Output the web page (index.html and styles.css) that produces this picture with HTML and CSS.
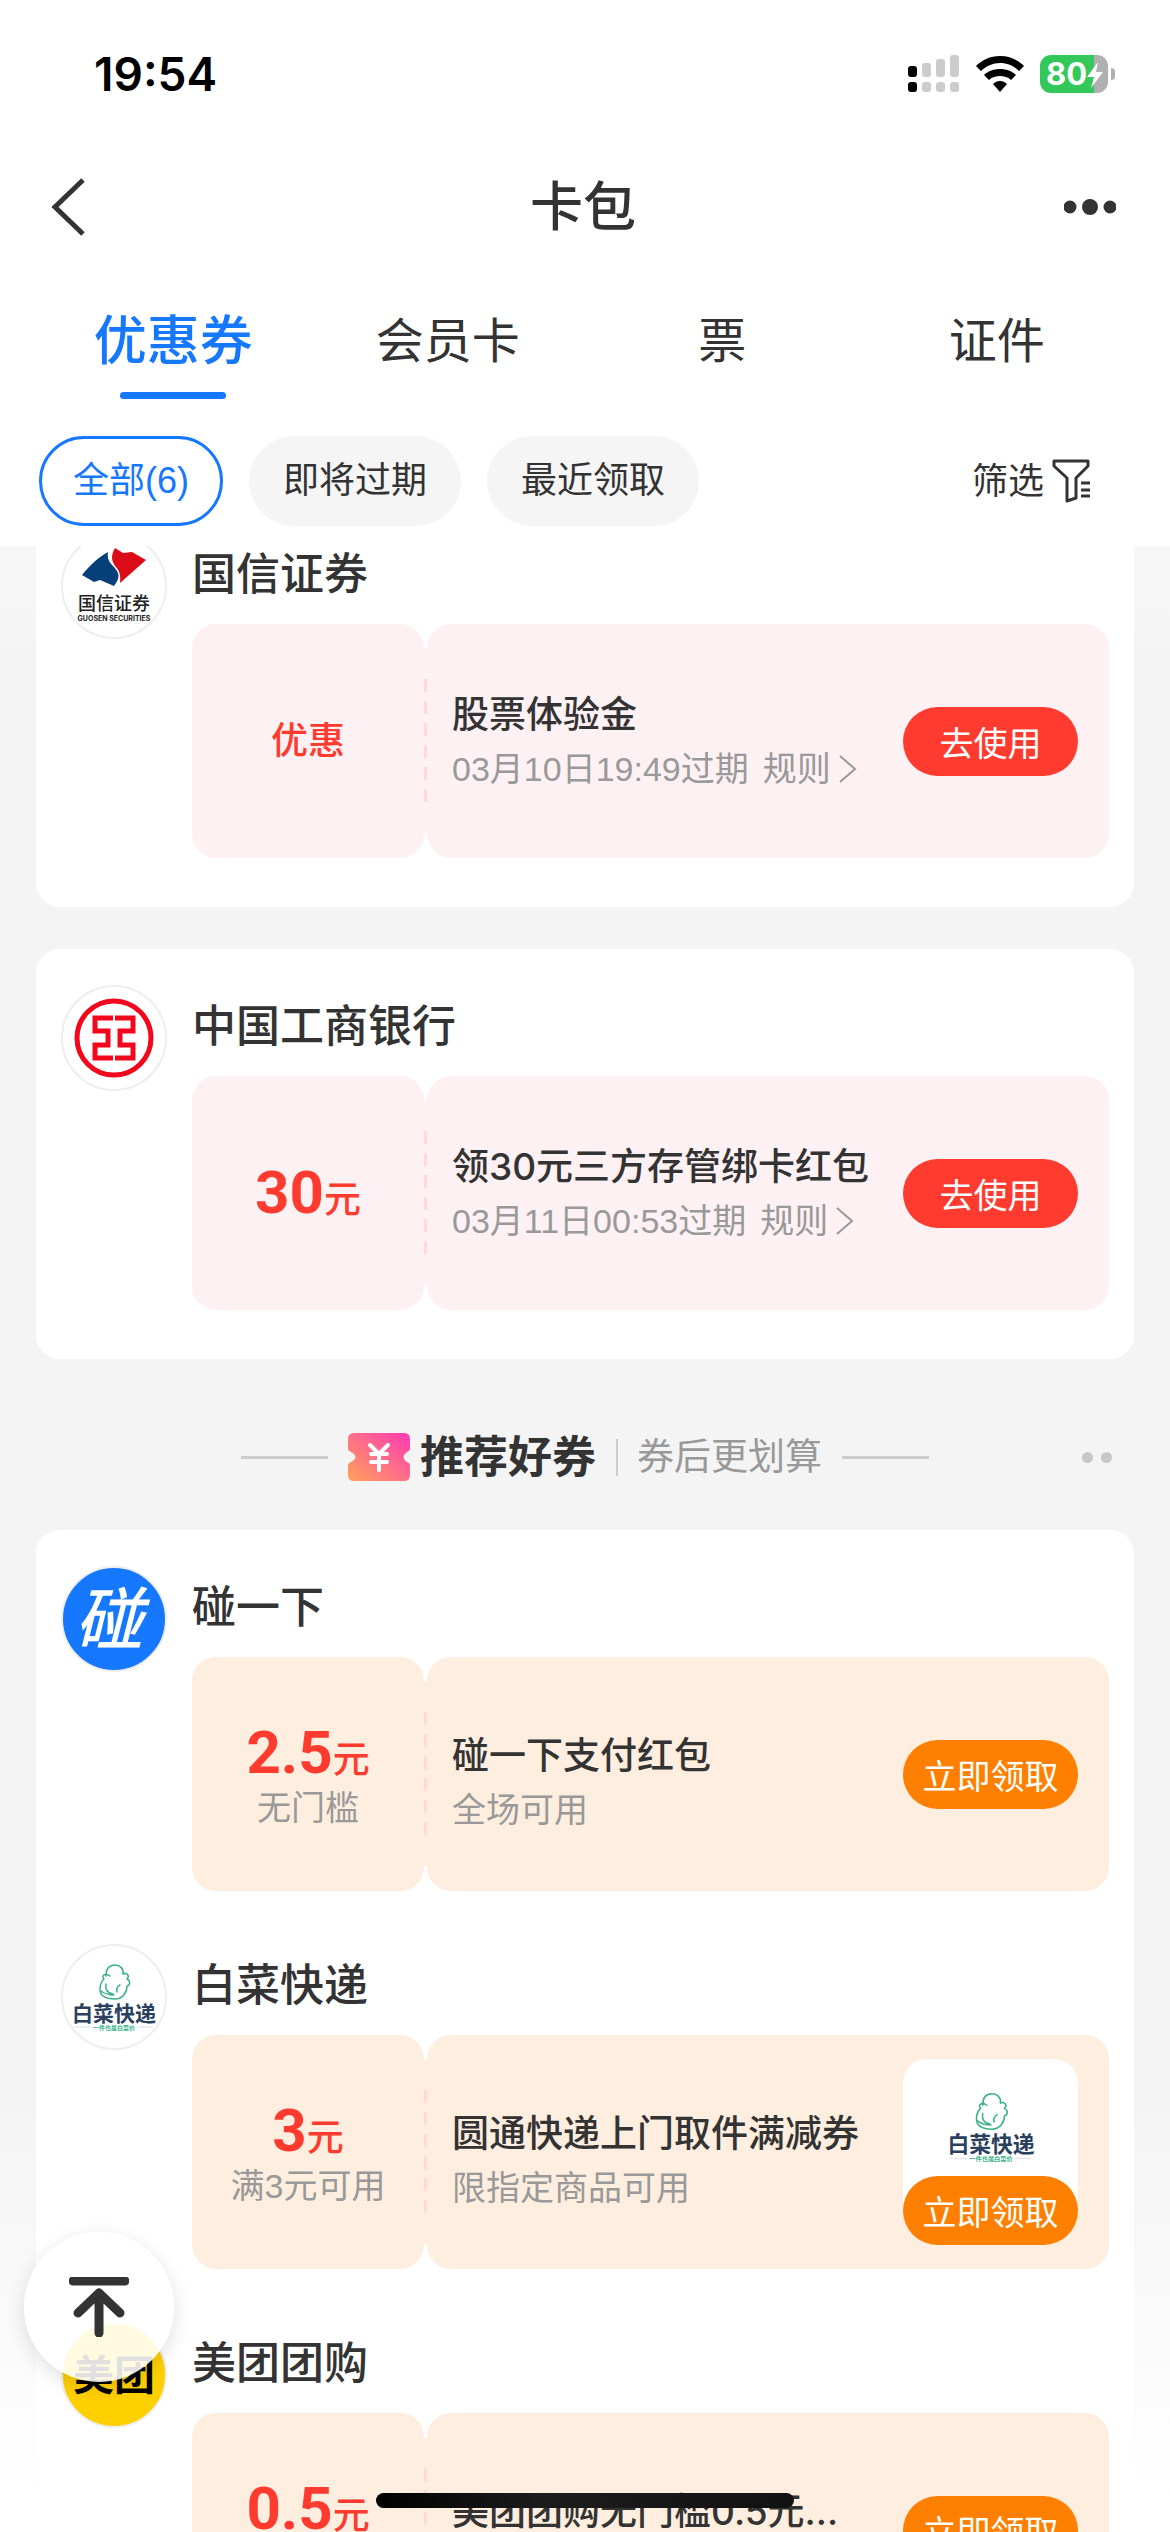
FILE: index.html
```html
<!DOCTYPE html>
<html lang="zh-CN">
<head>
<meta charset="utf-8">
<meta name="viewport" content="width=device-width, initial-scale=1">
<title>卡包</title>
<link rel="stylesheet" href="styles.css">
</head>
<body>
<svg class="defs" aria-hidden="true">
  <defs>
    <g id="cabbage" fill="none" stroke="#3cb28a" stroke-width="1.5" stroke-linecap="round" stroke-linejoin="round">
      <path d="M7 12C7 4 11 1 16 1s9 4 8 9c4-2 7 2 4 5 4 2 3 7 0 7 0 6-4 13-12 13C7 35 1 32 1 25c0-5 2-8 4-10-3-3 1-7 6-3"/>
      <path d="M7 20c-1 5 1 9 7 10M2 27c4 3 8 4 13 4M18 28c-1-4 1-6 3-7"/>
    </g>
  </defs>
</svg>
<div class="app">
  <header class="top">
    <div class="status">
      <span class="time">19:54</span>
      <span class="status-icons">
        <svg width="52" height="38" viewBox="0 0 52 38" aria-hidden="true">
          <g fill="#000"><rect x="0" y="11" width="9" height="11" rx="3"/><rect x="0" y="27" width="9" height="10" rx="3"/></g>
          <g fill="#ccc"><rect x="14" y="8" width="9" height="14" rx="3"/><rect x="28" y="4" width="9" height="18" rx="3"/><rect x="42" y="0" width="9" height="22" rx="3"/><rect x="14" y="27" width="9" height="10" rx="3"/><rect x="28" y="27" width="9" height="10" rx="3"/><rect x="42" y="27" width="9" height="10" rx="3"/></g>
        </svg>
        <svg width="48" height="36" viewBox="0 0 48 36" aria-hidden="true">
          <path d="M24 0C34 0 42 4 48 10l-5 5C38 10 31 7 24 7S10 10 5 15l-5-5C6 4 14 0 24 0z"/>
          <path d="M24 13c6 0 12 2 16 6l-5 5c-3-3-7-4-11-4s-8 1-11 4l-5-5c4-4 10-6 16-6z"/>
          <path d="M24 25c3 0 5 1 7 3l-7 8-7-8c2-2 4-3 7-3z"/>
        </svg>
        <span class="battery">
          <span class="battery-level">80</span>
          <svg class="bolt" width="18" height="26" viewBox="0 0 18 26" aria-hidden="true"><path d="M12 0L1 15h7L5 26 17 10h-7z" fill="#fff"/></svg>
        </span>
      </span>
    </div>
    <div class="nav">
      <button class="icon-btn" aria-label="返回"><svg width="36" height="60" viewBox="0 0 36 60"><path d="M33 3L5 30l28 27" fill="none" stroke="#333" stroke-width="5"/></svg></button>
      <h1>卡包</h1>
      <button class="icon-btn" aria-label="更多"><svg width="52" height="18" viewBox="0 0 52 18" fill="#333"><circle cx="6" cy="9" r="6.500"/><circle cx="26" cy="9" r="8"/><circle cx="46" cy="9" r="6.500"/></svg></button>
    </div>
    <nav class="tabs">
      <button class="tab active">优惠券</button>
      <button class="tab">会员卡</button>
      <button class="tab">票</button>
      <button class="tab">证件</button>
    </nav>
    <div class="filters">
      <button class="chip selected">全部(6)</button>
      <button class="chip">即将过期</button>
      <button class="chip">最近领取</button>
      <button class="filter-btn">筛选
        <svg width="38" height="44" viewBox="0 0 38 44" fill="none" stroke="#333" stroke-width="3" stroke-linejoin="round"><path d="M2 2h34v5L24 19v20l-9 3V19L2 7z"/><path d="M29 24h9M29 31h9M29 37h9"/></svg>
      </button>
    </div>
  </header>

  <main class="list">
    <section class="card">
      <article class="entry">
        <div class="logo"><svg width="102" height="102" viewBox="0 0 102 102" role="img" aria-label="国信证券">
          <path d="M45 17c-9 5-17 12-26 23l12 7 6-2 14 6c7-9 5-13 0-19-5-5-7-8-6-15z" fill="#054078"/>
          <path d="M52 13l8 5 9-1 14 8-26 23c1-9-1-13-5-17-4-6-4-11 0-18z" fill="#dc0b18"/>
          <text x="51" y="75" class="gx-name">国信证券</text><text x="51" y="86" class="gx-en">GUOSEN SECURITIES</text>
        </svg></div>
        <div class="entry-body">
          <h2>国信证券</h2>
          <div class="coupon pink">
            <div class="worth"><p class="label">优惠</p></div>
            <div class="rip"></div>
            <div class="info">
              <div class="text"><h3>股票体验金</h3><p>03月10日19:49过期<a href="#rules">规则<svg width="18" height="28" viewBox="0 0 18 28"><path d="M1 1l15 13L1 27" fill="none" stroke="#999" stroke-width="2"/></svg></a></p></div>
              <button class="action">去使用</button>
            </div>
          </div>
        </div>
      </article>
    </section>

    <section class="card">
      <article class="entry">
        <div class="logo"><svg width="102" height="102" viewBox="0 0 102 102" role="img" aria-label="中国工商银行" fill="none" stroke="#f3071c">
          <circle cx="51" cy="51" r="37" stroke-width="5"/>
          <path d="M50 31H32v13h13v14H32v13h18M52 31h18v13H57v14h13v13H52" stroke-width="5"/>
        </svg></div>
        <div class="entry-body">
          <h2>中国工商银行</h2>
          <div class="coupon pink">
            <div class="worth"><p class="amount"><b>30</b>元</p></div>
            <div class="rip"></div>
            <div class="info">
              <div class="text"><h3>领30元三方存管绑卡红包</h3><p>03月11日00:53过期<a href="#rules">规则<svg width="18" height="28" viewBox="0 0 18 28"><path d="M1 1l15 13L1 27" fill="none" stroke="#999" stroke-width="2"/></svg></a></p></div>
              <button class="action">去使用</button>
            </div>
          </div>
        </div>
      </article>
    </section>

    <div class="divider">
      <span class="rule"></span>
      <svg class="ticket" width="62" height="48" viewBox="0 0 62 48" aria-hidden="true">
        <defs><linearGradient id="tk" x1="0" y1="1" x2="1" y2="0"><stop offset="0" stop-color="#ffa05a"/><stop offset=".5" stop-color="#ff6f88"/><stop offset="1" stop-color="#ff38b4"/></linearGradient></defs>
        <path d="M6 0h50q6 0 6 6v10q0 2-3 3-7 5 0 10 3 1 3 3v10q0 6-6 6H6q-6 0-6-6V32q0-2 3-3 9-5 0-10-3-1-3-3V6q0-6 6-6z" fill="url(#tk)"/>
        <path d="M22 12l9 9 9-9M23 21h16M23 29h16M31 21v16" fill="none" stroke="#fff" stroke-width="4" stroke-linecap="round"/>
      </svg>
      <h2>推荐好券</h2>
      <span class="bar"></span>
      <span class="hint">券后更划算</span>
      <span class="rule"></span>
      <button class="more" aria-label="更多选项"><i></i><i></i></button>
    </div>

    <section class="card">
      <article class="entry">
        <div class="logo bump"><span>碰</span></div>
        <div class="entry-body">
          <h2>碰一下</h2>
          <div class="coupon orange">
            <div class="worth"><p class="amount"><b>2.5</b>元</p><p class="cond">无门槛</p></div>
            <div class="rip"></div>
            <div class="info">
              <div class="text"><h3>碰一下支付红包</h3><p>全场可用</p></div>
              <button class="action">立即领取</button>
            </div>
          </div>
        </div>
      </article>

      <article class="entry">
        <div class="logo"><svg width="102" height="102" viewBox="0 0 102 102" role="img" aria-label="白菜快递">
          <use href="#cabbage" x="36" y="18"/>
          <text x="51" y="75" class="bc-name">白菜快递</text>
          <path d="M12 81h16M74 81h16" stroke="#ddd"/><text x="51" y="84" class="bc-tag">一件也是白菜价</text>
        </svg></div>
        <div class="entry-body">
          <h2>白菜快递</h2>
          <div class="coupon orange">
            <div class="worth"><p class="amount"><b>3</b>元</p><p class="cond">满3元可用</p></div>
            <div class="rip"></div>
            <div class="info">
              <div class="text"><h3>圆通快递上门取件满减券</h3><p>限指定商品可用</p></div>
              <div class="goods">
                <svg width="106" height="102" viewBox="0 0 102 98" role="img" aria-label="白菜快递">
                  <use href="#cabbage" x="36" y="18"/>
                  <text x="51" y="75" class="bc-name">白菜快递</text>
                  <path d="M12 81h16M74 81h16" stroke="#ddd"/><text x="51" y="84" class="bc-tag">一件也是白菜价</text>
                </svg>
                <button class="action">立即领取</button>
              </div>
            </div>
          </div>
        </div>
      </article>

      <article class="entry">
        <div class="logo meituan"><span>美团</span></div>
        <div class="entry-body">
          <h2>美团团购</h2>
          <div class="coupon orange">
            <div class="worth"><p class="amount"><b>0.5</b>元</p><p class="cond">无门槛</p></div>
            <div class="rip"></div>
            <div class="info">
              <div class="text"><h3>美团团购无门槛0.5元通用红包</h3><p>限指定商品可用</p></div>
              <button class="action">立即领取</button>
            </div>
          </div>
        </div>
      </article>
    </section>
  </main>

  <button class="to-top" aria-label="回到顶部"><svg width="60" height="60" viewBox="0 0 60 60" fill="none" stroke="#333" stroke-width="9" stroke-linecap="round" stroke-linejoin="round"><path d="M4 4h52M30 17v39M9 36l21-20 21 20"/></svg></button>
  <div class="home-bar"></div>
</div>
</body>
</html>
```
FILE: styles.css
```css
* { box-sizing: border-box; margin: 0; padding: 0; }

body {
  font-family: Inter, "Noto Sans CJK SC", sans-serif;
  color: #333;
  background: #fff;
}

button { border: 0; background: none; font: inherit; color: inherit; cursor: pointer; }
a { color: inherit; text-decoration: none; }
svg { display: block; flex: none; }
.defs { position: absolute; width: 0; height: 0; }

.app {
  position: relative;
  display: flex;
  flex-direction: column;
  height: 100vh;
  overflow: hidden;
}

/* header */
.top { flex: none; position: relative; z-index: 1; background: #fff; padding-bottom: 20px; }

.status {
  display: flex;
  align-items: center;
  justify-content: space-between;
  height: 148px;
  padding: 0 55px 0 94px;
}
.time { font-size: 46px; font-weight: 600; color: #000; }
.status-icons { display: flex; align-items: center; gap: 16px; }
.battery {
  position: relative;
  width: 68px;
  height: 38px;
  margin-right: 7px;
  border-radius: 11px;
  background: linear-gradient(90deg, #34c759 54px, #b0b0b0 54px);
}
.battery::after {
  content: "";
  position: absolute;
  left: 71px;
  top: 13px;
  width: 4px;
  height: 12px;
  border-radius: 0 4px 4px 0;
  background: #b0b0b0;
}
.battery-level {
  display: block;
  padding-left: 6px;
  font-size: 31px;
  line-height: 38px;
  font-weight: 700;
  color: #fff;
}
.bolt { position: absolute; right: 4px; top: 7px; }

.nav {
  display: flex;
  align-items: center;
  justify-content: space-between;
  height: 118px;
  padding: 0 54px 0 50px;
}
.nav h1 { font-size: 53px; line-height: 64px; font-weight: 500; }
.icon-btn { display: flex; width: 60px; height: 60px; align-items: center; }
.icon-btn:last-child { justify-content: flex-end; }

.tabs { display: flex; padding: 26px 36px 0; }
.tab {
  flex: 1;
  display: flex;
  flex-direction: column;
  align-items: center;
  font-size: 48px;
  line-height: 98px;
}
.tab::after { content: ""; width: 106px; height: 7px; margin-top: 2px; border-radius: 4px; }
.tab.active { font-size: 53px; font-weight: 500; color: #1677ff; }
.tab.active::after { background: #1677ff; }

.filters { display: flex; align-items: center; gap: 26px; margin-top: 37px; padding: 0 80px 0 39px; }
.chip {
  height: 90px;
  padding: 0 34px;
  border-radius: 45px;
  background: #f5f5f5;
  font-family: "Liberation Sans", "Noto Sans CJK SC", sans-serif;
  font-size: 36px;
  line-height: 44px;
  white-space: nowrap;
}
.chip.selected { padding: 0 31px; border: 3px solid #1677ff; background: #fff; color: #1677ff; }
.filter-btn {
  display: flex;
  align-items: center;
  gap: 8px;
  margin-left: auto;
  font-size: 36px;
  line-height: 44px;
}

/* coupon list, scrolled part of the way under the header */
.list {
  flex: 1;
  min-height: 0;
  overflow: hidden;
  padding: 0 36px;
  background: linear-gradient(#f7f7f7, #f4f4f4 110px, #f4f4f4 1560px, #fff 1960px);
}
.card {
  display: flex;
  flex-direction: column;
  gap: 53px;
  margin-bottom: 42px;
  padding: 36px 25px 49px;
  border-radius: 24px;
  background: #fff;
}
.card:first-child { margin-top: -49px; }

.entry { display: flex; gap: 25px; }
.entry-body { flex: 1; min-width: 0; }
.entry-body h2 { margin-bottom: 9px; font-size: 44px; line-height: 82px; font-weight: 500; }

.logo {
  flex: none;
  display: flex;
  align-items: center;
  justify-content: center;
  width: 106px;
  height: 106px;
  border: 2px solid #eee;
  border-radius: 50%;
  background: #fff;
  overflow: hidden;
}
.logo span { font-weight: 700; line-height: 1; white-space: nowrap; }
.bump { padding-right: 10px; background: #1677ff; color: #fff; }
.bump span { font-size: 68px; font-weight: 500; font-style: italic; }
.meituan { background: #ffd000; color: #000; }
.meituan span { font-size: 41px; }
text { text-anchor: middle; font-weight: 700; }
.gx-name { font-size: 18px; font-weight: 500; fill: #222; }
.gx-en { font-size: 7px; fill: #222; }
.bc-name { font-size: 21px; fill: #2b3f5f; }
.bc-tag { font-size: 6px; fill: #3cb28a; }

.coupon { --tint: #fef1f3; display: flex; height: 234px; }
.orange { --tint: #feeedf; }
.worth {
  flex: none;
  display: flex;
  flex-direction: column;
  align-items: center;
  justify-content: center;
  width: 232px;
  border-radius: 24px;
  background: var(--tint);
  color: #ff3b30;
}
.orange .worth { padding-top: 14px; }
.label { font-size: 37px; line-height: 46px; font-weight: 500; }
.amount { font-size: 37px; line-height: 46px; font-weight: 500; }
.amount:only-child { padding-top: 6px; }
.amount b { font-family: Roboto, sans-serif; font-size: 60px; font-weight: 700; }
.cond, .text p { font-family: "Liberation Sans", "Noto Sans CJK SC", sans-serif; font-size: 34px; color: #999; }
.cond { line-height: 50px; }

.rip {
  flex: none;
  width: 3px;
  margin: 25px 0;
  padding: 30px 0;
  background: repeating-linear-gradient(#ffd9db 0 13px, transparent 13px 22px) content-box, var(--tint);
}
.info {
  flex: 1;
  min-width: 0;
  display: flex;
  align-items: center;
  justify-content: space-between;
  padding: 0 31px 0 25px;
  border-radius: 24px;
  background: var(--tint);
}
.text { flex: 0 1 auto; min-width: 0; max-width: 420px; padding-top: 4px; }
.text h3 {
  overflow: hidden;
  font-size: 37px;
  line-height: 52px;
  font-weight: 500;
  white-space: nowrap;
  text-overflow: ellipsis;
}
.text p { display: flex; line-height: 56px; white-space: nowrap; }
.text a { display: flex; align-items: center; gap: 8px; margin-left: 14px; }
.orange .text { padding-top: 20px; }

.action {
  flex: none;
  width: 175px;
  height: 69px;
  border-radius: 35px;
  background: #ff3b30;
  color: #fff;
  font-size: 34px;
  white-space: nowrap;
}
.orange .action { background: #ff8000; }
.goods {
  flex: none;
  display: flex;
  flex-direction: column;
  align-items: center;
  justify-content: space-between;
  height: 186px;
  padding-top: 15px;
  border-radius: 24px;
  background: linear-gradient(#fff, #fff) top / 100% 150px no-repeat;
}

/* section heading */
.divider {
  position: relative;
  display: flex;
  align-items: center;
  justify-content: center;
  height: 112px;
  margin-bottom: 17px;
}
.rule { width: 87px; height: 3px; background: #ccc; }
.ticket { margin: 0 10px 0 20px; }
.divider h2 { font-size: 44px; line-height: 56px; font-weight: 700; }
.bar { width: 2px; height: 37px; margin: 0 19px 0 20px; background: #ccc; }
.hint { margin-right: 20px; font-size: 37px; line-height: 46px; color: #999; }
.more { position: absolute; right: 22px; display: flex; gap: 8px; padding: 20px 0; }
.more i { width: 11px; height: 11px; border-radius: 50%; background: #c8c8c8; }

/* floating controls */
.to-top {
  position: absolute;
  left: 24px;
  bottom: 150px;
  z-index: 2;
  display: flex;
  align-items: center;
  justify-content: center;
  width: 150px;
  height: 150px;
  border-radius: 50%;
  background: rgba(255, 255, 255, .88);
  box-shadow: 0 6px 20px rgba(0, 0, 0, .12);
}
.home-bar {
  position: absolute;
  left: 50%;
  bottom: 24px;
  z-index: 2;
  width: 418px;
  height: 15px;
  margin-left: -209px;
  border-radius: 8px;
  background: linear-gradient(90deg, #000, #1c1c1c 40%, #111);
}
```
